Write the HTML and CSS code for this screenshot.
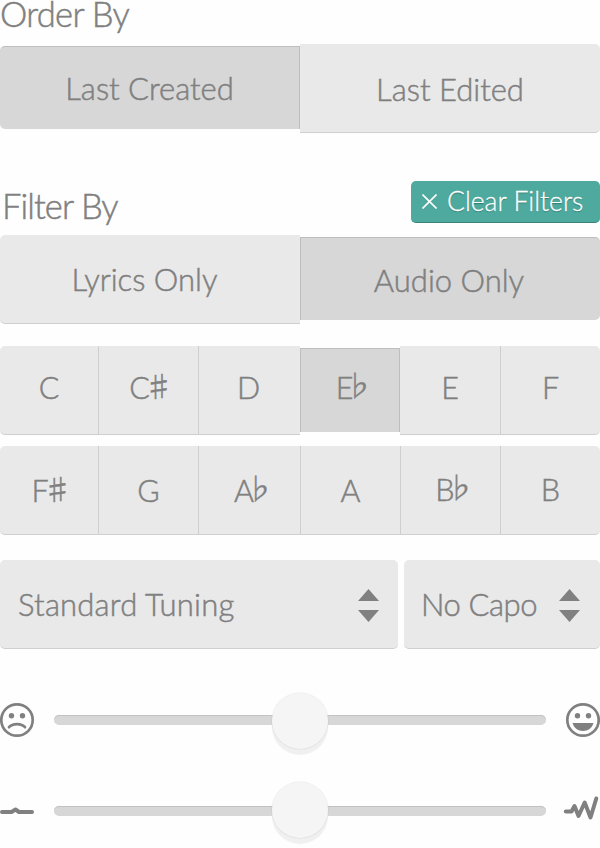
FILE: index.html
```
<!DOCTYPE html>
<html lang="en">
<head>
<meta charset="utf-8">
<title>Song filters</title>
<link rel="stylesheet" href="styles.css">
</head>
<body>
<main class="panel">
  <h2 class="heading heading-order">Order By</h2>
  <div class="segmented order">
    <button class="segment is-active first">Last Created</button>
    <button class="segment last edited">Last Edited</button>
  </div>

  <div class="filter-head">
    <h2 class="heading heading-filter">Filter By</h2>
    <button class="clear">
      <svg class="clear-icon" width="15" height="15" viewBox="0 0 15 15"><path d="M.5 .5 14.500 14.500M14.500 .5 .5 14.500"/></svg>
      <span>Clear Filters</span>
    </button>
  </div>
  <div class="segmented">
    <button class="segment first lyrics">Lyrics Only</button>
    <button class="segment is-active last audio">Audio Only</button>
  </div>

  <div class="keys keys-top">
    <button class="key first">C</button>
    <button class="key">C<span class="accidental sharp">♯</span></button>
    <button class="key plain">D</button>
    <button class="key is-active">E<span class="accidental flat">♭</span></button>
    <button class="key">E</button>
    <button class="key last">F</button>
  </div>
  <div class="keys keys-bottom">
    <button class="key first">F<span class="accidental sharp">♯</span></button>
    <button class="key">G</button>
    <button class="key">A<span class="accidental flat">♭</span></button>
    <button class="key">A</button>
    <button class="key raised">B<span class="accidental flat">♭</span></button>
    <button class="key last raised">B</button>
  </div>

  <div class="selects">
    <button class="select tuning"><span>Standard Tuning</span>
      <svg class="arrows" width="21" height="33" viewBox="0 0 21 33"><path d="M10.500 0 21 12H0ZM0 21H21L10.500 33Z"/></svg>
    </button>
    <button class="select capo"><span>No Capo</span>
      <svg class="arrows" width="21" height="33" viewBox="0 0 21 33"><path d="M10.500 0 21 12H0ZM0 21H21L10.500 33Z"/></svg>
    </button>
  </div>

  <div class="slider mood">
    <svg class="icon" width="34" height="34" viewBox="0 0 34 34">
      <circle class="line" cx="17" cy="17" r="15.700"/>
      <circle class="fill" cx="11.500" cy="12.700" r="2.700"/><circle class="fill" cx="22.500" cy="12.700" r="2.700"/>
      <path class="line" d="M9 24.200C12.500 20 21.500 20 25 24.200"/>
    </svg>
    <div class="track"><span class="knob"></span></div>
    <svg class="icon" width="34" height="34" viewBox="0 0 34 34">
      <circle class="line" cx="17" cy="17" r="15.700"/>
      <circle class="fill" cx="11.500" cy="12.700" r="2.700"/><circle class="fill" cx="22.500" cy="12.700" r="2.700"/>
      <path class="fill" d="M6.500 20H27.500C26 25.300 22 28 17 28S8 25.300 6.500 20Z"/>
    </svg>
  </div>
  <div class="slider energy">
    <svg class="icon" width="34" height="34" viewBox="0 0 34 34">
      <path class="wave" d="M2 18H11.500L15.500 15.500L19 18H32"/>
    </svg>
    <div class="track"><span class="knob"></span></div>
    <svg class="icon spikes" width="36" height="34" viewBox="0 0 36 34">
      <path class="wave" d="M1.800 17.500H7.500L10.500 12L14.500 22L20.700 8.500L26.500 23.500L32.300 4.500"/>
    </svg>
  </div>
</main>
</body>
</html>
```
FILE: styles.css
```
* { box-sizing: border-box; }

body {
  margin: 0;
  background: #fefefe;
  color: #808080;
  font: 300 31px/88px Lato, "Open Sans", sans-serif;
  -webkit-text-stroke: 0.5px #808080;
}

.panel { width: 600px; height: 848px; overflow: hidden; }

button {
  margin: 0;
  padding: 0;
  border: 0;
  background: #e9e9e9;
  color: inherit;
  font: inherit;
  letter-spacing: inherit;
  -webkit-text-stroke: inherit;
}

.heading { margin: 0; font-size: 34.5px; font-weight: 300; line-height: 44px; }
.heading-order { height: 44px; line-height: 27px; letter-spacing: -0.7px; }
.heading-filter { padding: 3px 0 0 2px; letter-spacing: -0.9px; }

.segmented, .keys { display: grid; align-items: start; height: 89px; }
.segmented { grid-template-columns: 300px 300px; }

.segment, .key, .select {
  height: 89px;
  border-bottom: 1px solid #cfcfcf;
  white-space: nowrap;
}
.first { border-radius: 5px 0 0 5px; }
.last { border-radius: 0 5px 5px 0; }

.segment.is-active, .key.is-active {
  height: 83px;
  margin-top: 2px;
  border: 0 solid #bebebe;
  border-top-width: 1px;
  background: #d7d7d7;
  line-height: 82px;
}
.segment.first.is-active { border-right-width: 1px; }
.segment.last.is-active { border-left-width: 1px; }
.segment.edited { padding-top: 1px; }
.segment.lyrics { padding: 0 11px 1px 0; }
.segment.audio { padding: 1px 3px 0 0; }

.filter-head {
  display: flex;
  justify-content: space-between;
  height: 54px;
  margin-top: 48px;
}

.clear {
  display: flex;
  align-items: center;
  gap: 10px;
  width: 189px;
  height: 42px;
  padding-left: 11px;
  border-bottom: 1px solid #3a8379;
  border-radius: 5px;
  background: #4eaa9e;
  color: #fff;
  font-size: 26.5px;
  line-height: 41px;
  text-shadow: 0 1px 1px #31776f;
  white-space: nowrap;
  -webkit-text-stroke: 0.3px #fff;
}
.clear-icon path { stroke: #fff; stroke-width: 1.6; }

.keys-top { grid-template-columns: 99px 100px 101px 100px 101px 99px; margin-top: 22px; line-height: 82px; }
.keys-bottom { grid-template-columns: 99px 100px 102px 100px 100px 99px; margin-top: 11px; }
.key {
  display: flex;
  justify-content: center;
  border-right: 1px solid #cfcfcf;
  font-size: 30.5px;
}
.key.last, .key.plain { border-right: 0; }
.key.plain { padding-right: 2px; }
.key.is-active { height: 84px; border-width: 1px 1px 0; line-height: 76px; }
.key.raised { line-height: 87px; }

.accidental {
  display: inline-flex;
  justify-content: center;
  margin-top: -2px;
  font-family: "Noto Sans CJK JP", sans-serif;
  font-size: 29px;
}
.sharp { width: 18px; }
.flat { width: 11px; margin-top: -3px; }

.selects { display: flex; gap: 6px; margin-top: 25px; }
.select {
  display: flex;
  justify-content: space-between;
  align-items: center;
  padding: 0 19px 0 18px;
  border-radius: 5px;
}
.tuning { width: 398px; letter-spacing: 0.2px; }
.capo { width: 196px; padding: 0 20px 0 17px; letter-spacing: -0.4px; }
.arrows { margin-top: 2px; fill: #808080; }

.slider { display: flex; align-items: center; justify-content: space-between; height: 34px; }
.mood { margin-top: 54px; }
.energy { margin-top: 57px; }
.icon { flex: none; overflow: visible; }
.line { fill: none; stroke: #808080; stroke-width: 2.7; stroke-linecap: round; }
.fill { fill: #808080; }
.wave { fill: none; stroke: #808080; stroke-width: 4; stroke-linecap: round; stroke-linejoin: round; }
.spikes { margin-left: -2px; }

.track {
  display: flex;
  justify-content: center;
  align-items: center;
  width: 492px;
  height: 10px;
  border-radius: 5px;
  background: #d7d7d7;
  box-shadow: inset 0 1px 0 #c2c2c2;
}
.knob {
  flex: none;
  width: 56px;
  height: 56px;
  margin-top: 2px;
  border-radius: 50%;
  background: #f5f5f5;
  box-shadow: 0 0 1px 0.5px rgba(0, 0, 0, .08), 0 6px 1px 0 #f0f0f0;
}
.energy .knob { margin-top: -2px; }
```
